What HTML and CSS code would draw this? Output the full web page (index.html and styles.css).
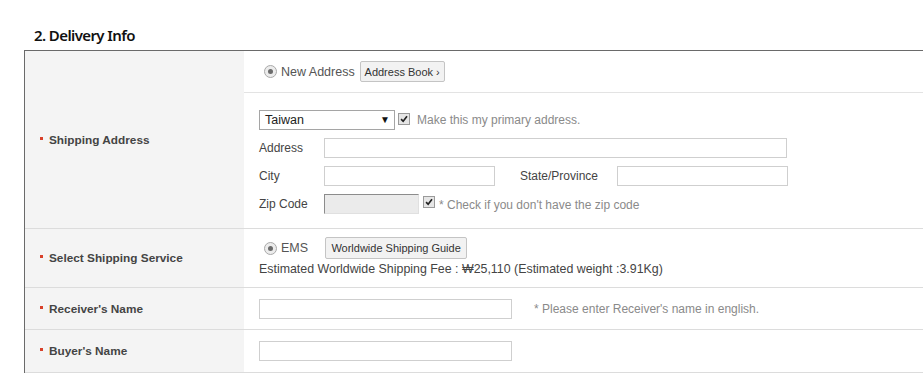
FILE: index.html
```html
<!DOCTYPE html>
<html>
<head>
<meta charset="utf-8">
<link rel="stylesheet" href="styles.css">
</head>
<body>
<div class="page">
  <h2 class="title">2. Delivery Info</h2>
  <div class="form">
    <div class="label"><span class="bullet"></span>Shipping Address</div>
    <div class="cell split">
      <div class="sub top">
        <span class="radio on"></span><span class="opt">New Address</span>
        <button class="btn book">Address Book ›</button>
      </div>
      <div class="sub addr">
        <div class="line">
          <div class="select"><span>Taiwan</span><span class="arrow">▼</span></div>
          <span class="check"><svg viewBox="0 0 12 12" width="12" height="12"><path d="M2.5 6.2 L5 8.8 L9.6 2.8" fill="none" stroke="#222" stroke-width="2"/></svg></span>
          <span class="hint">Make this my primary address.</span>
        </div>
        <div class="line">
          <span class="flabel">Address</span><span class="input w-addr"></span>
        </div>
        <div class="line">
          <span class="flabel">City</span><span class="input w-city"></span>
          <span class="flabel state">State/Province</span><span class="input w-city"></span>
        </div>
        <div class="line">
          <span class="flabel">Zip Code</span><span class="input zip"></span>
          <span class="check zipcheck"><svg viewBox="0 0 12 12" width="12" height="12"><path d="M2.5 6.2 L5 8.8 L9.6 2.8" fill="none" stroke="#222" stroke-width="2"/></svg></span>
          <span class="hint small">* Check if you don't have the zip code</span>
        </div>
      </div>
    </div>

    <div class="label"><span class="bullet"></span>Select Shipping Service</div>
    <div class="cell ship">
      <div class="line">
        <span class="radio on"></span><span class="opt">EMS</span>
        <button class="btn guide">Worldwide Shipping Guide</button>
      </div>
      <div class="fee">Estimated Worldwide Shipping Fee : ₩25,110 (Estimated weight :3.91Kg)</div>
    </div>

    <div class="label"><span class="bullet"></span>Receiver's Name</div>
    <div class="cell name">
      <span class="input w-name"></span>
      <span class="hint note">* Please enter Receiver's name in english.</span>
    </div>

    <div class="label last"><span class="bullet"></span>Buyer's Name</div>
    <div class="cell name last">
      <span class="input w-name"></span>
    </div>
  </div>
</div>
</body>
</html>
```

FILE: styles.css
```css
html, body {
  margin: 0;
  padding: 0;
  background: #fff;
}
body {
  font-family: "Liberation Sans", Arial, sans-serif;
  font-size: 12px;
  color: #444;
}
.page {
  padding: 25px 0 0 24px;
}
.title {
  margin: 0 0 4px 10px;
  font-family: "Noto Sans", "Open Sans", sans-serif;
  font-size: 15px;
  font-weight: 600;
  letter-spacing: -0.6px;
  line-height: 21px;
  color: #111;
}
.form {
  display: grid;
  grid-template-columns: 219px 1fr;
  border-top: 1px solid #6a6a6a;
  border-left: 1px solid #6a6a6a;
}
.label {
  background: #f4f4f4;
  border-bottom: 1px solid #dcdcdc;
  display: flex;
  align-items: center;
  padding-left: 15px;
  font-weight: bold;
  font-size: 11.8px;
  color: #444;
}
.bullet {
  width: 3px;
  height: 3px;
  background: #d8402a;
  margin-right: 6px;
  margin-top: -3px;
}
.cell {
  border-bottom: 1px solid #dcdcdc;
  padding-left: 15px;
}
.split {
  padding-left: 0;
  display: flex;
  flex-direction: column;
}
.sub {
  padding-left: 15px;
}
.sub.top {
  height: 41px;
  border-bottom: 1px solid #e3e3e3;
  display: flex;
  align-items: center;
}
.sub.addr {
  padding-top: 16px;
  padding-bottom: 14px;
  display: flex;
  flex-direction: column;
  gap: 8px;
}
.line {
  display: flex;
  align-items: center;
  height: 20px;
}
.sub.addr .line:first-child {
  height: 21px;
}
.radio {
  width: 11px;
  height: 11px;
  border: 1px solid #a9a9a9;
  border-radius: 50%;
  background: #ececec;
  margin-left: 5px;
  margin-right: 4px;
  position: relative;
  box-sizing: content-box;
}
.radio.on::after {
  content: "";
  position: absolute;
  left: 3px;
  top: 3px;
  width: 5px;
  height: 5px;
  border-radius: 50%;
  background: #6b6b6b;
}
.opt {
  font-size: 12.5px;
  color: #555;
  margin-right: 5px;
}
.btn {
  font-family: "Liberation Sans", Arial, sans-serif;
  font-size: 11px;
  color: #333;
  background: #f2f2f2;
  border: 1px solid #c4c4c4;
  border-radius: 2px;
  padding: 0;
  height: 21px;
  box-sizing: border-box;
}
.btn.book {
  width: 85px;
}
.btn.guide {
  width: 142px;
  height: 22px;
  margin-left: 12px;
}
.select {
  width: 136px;
  height: 20px;
  box-sizing: border-box;
  border: 1px solid #a5a5a5;
  display: flex;
  align-items: center;
  justify-content: space-between;
  padding: 0 4px 0 5px;
  font-size: 12.5px;
  color: #222;
  background: #fff;
}
.arrow {
  font-size: 10px;
  color: #111;
}
.check {
  width: 12px;
  height: 12px;
  border: 1px solid #9a9a9a;
  background: #e6e6e6;
  box-sizing: border-box;
  margin-left: 3px;
  margin-right: 7px;
  display: flex;
  align-items: center;
  justify-content: center;
  margin-top: -2px;
}
.check svg {
  display: block;
  width: 10px;
  height: 10px;
}
.hint {
  color: #8a8a8a;
  font-size: 12px;
}
.zipcheck {
  margin-left: 4px;
  margin-right: 4px;
  margin-top: -4px;
}
.hint.small {
  margin-top: 2px;
}
.flabel {
  width: 65px;
  color: #444;
  font-size: 12px;
}
.flabel.state {
  width: 97px;
  margin-left: 25px;
}
.input {
  height: 20px;
  box-sizing: border-box;
  border: 1px solid #cfcfcf;
  background: #fff;
  display: block;
}
.w-addr { width: 463px; }
.w-city { width: 171px; }
.w-name { width: 253px; }
.input.zip {
  width: 95px;
  background: #ebebeb;
  border-color: #e0e0e0;
  border-top: 1px solid #8c8c8c;
  border-left: 1px solid #8c8c8c;
}
.ship {
  height: 58px;
  box-sizing: content-box;
  padding-top: 0;
  display: flex;
  flex-direction: column;
  justify-content: center;
}
.ship .line {
  height: 22px;
  margin-top: -2px;
}
.fee {
  color: #444;
  font-size: 12.4px;
  line-height: 16px;
  margin-top: 2px;
}
.name {
  display: flex;
  align-items: center;
  height: 41px;
}
.name.last, .label.last {
  height: 42px;
}
.note {
  margin-left: 22px;
}
```
